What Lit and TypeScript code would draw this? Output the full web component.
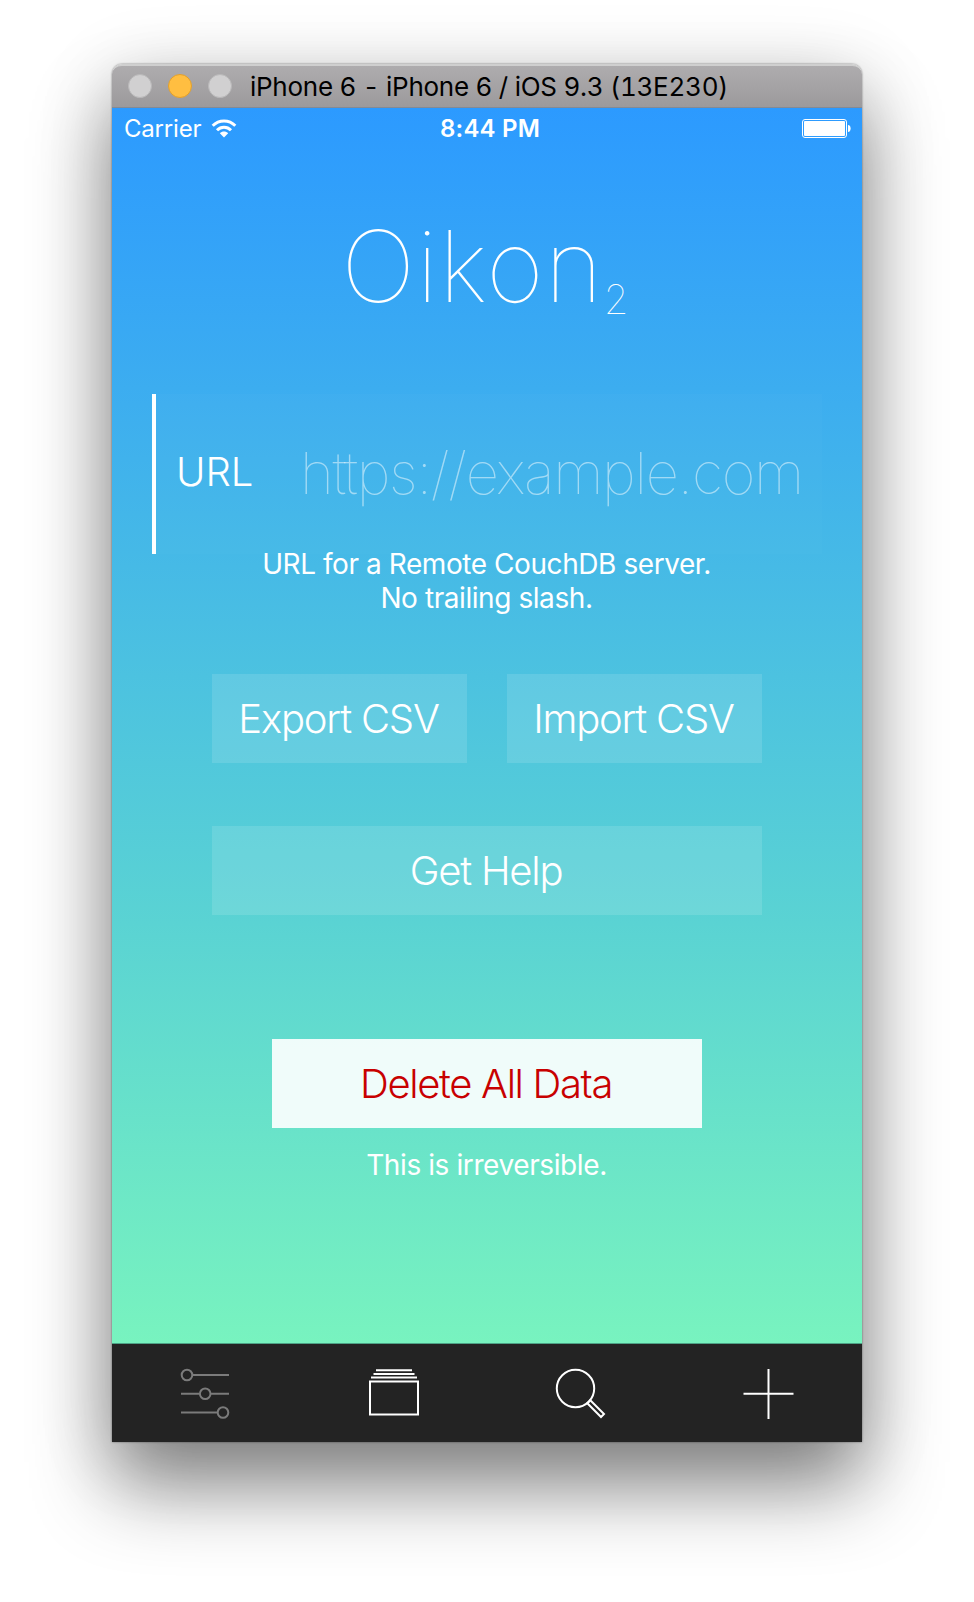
import { LitElement, html, css } from "lit";
import { customElement } from "lit/decorators.js";

@customElement("app-root")
export class AppRoot extends LitElement {
  static styles = css`
    :host { display: block; box-sizing: border-box; width: 974px; height: 1602px; padding: 64px 112px 0; background: #fff; overflow: hidden; font-family: Inter, "Liberation Sans", sans-serif; color: #fff; }
    .window { width: 750px; height: 1378px; border-radius: 10px 10px 0 0; box-shadow: 0 0 2px rgba(0,0,0,.55), 0 46px 80px rgba(0,0,0,.44), 0 12px 76px rgba(0,0,0,.16); display: flex; flex-direction: column; }
    .titlebar { height: 44px; box-sizing: border-box; border-radius: 10px 10px 0 0; background: linear-gradient(#aeacae, #9c9a9c); border-top: 2px solid #cfcfcf; border-bottom: 1px solid #858a94; display: flex; align-items: center; padding-left: 16px; }
    .dots { display: flex; gap: 16px; width: 122px; margin-top: -2px; }
    .dot { width: 24px; height: 24px; border-radius: 50%; background: #d1d0d1; box-sizing: border-box; border: 1px solid #b9b8b9; }
    .dot.min { background: #ffbe41; border: 1px solid #e2a02c; }
    .title { color: #000; font-size: 26px; line-height: 40px; font-variant-numeric: tabular-nums; letter-spacing: -0.27px; white-space: nowrap; }
    .screen { height: 1236px; box-sizing: border-box; border-bottom: 1px solid #4da286; background: linear-gradient(#2c9aff, #3daeef 24%, #4cc2e0 46%, #5ad3d3 66%, #78f3bf); display: flex; flex-direction: column; align-items: center; }
    .status { width: 100%; height: 40px; box-sizing: border-box; padding: 1px 11px 0 12px; display: grid; grid-template-columns: 1fr auto 1fr; align-items: center; font-size: 24px; line-height: 40px; }
    .carrier { display: flex; align-items: center; gap: 10px; letter-spacing: -0.2px; }
    .carrier svg, .battery { margin-bottom: 2px; }
    .time { font-weight: 600; letter-spacing: 0.2px; padding-left: 5px; }
    .battery { justify-self: end; display: block; }
    .brand { height: 246px; box-sizing: border-box; padding: 60px 4px 0 0; display: flex; align-items: baseline; font-weight: 100; }
    .name { font-size: 99px; line-height: 116px; letter-spacing: 1.2px; }
    .ver { font-size: 40px; line-height: 40px; position: relative; top: 12px; }
    .field { width: 670px; height: 160px; box-sizing: border-box; border-left: 4px solid #fff; background: rgba(255,255,255,.015); display: flex; }
    .label { font-size: 40px; font-weight: 300; line-height: 156px; width: 124px; padding-left: 20px; }
    .ph { font-size: 58px; font-weight: 100; line-height: 158px; letter-spacing: -1.3px; color: rgba(255,255,255,.5); white-space: nowrap; }
    .hint { font-size: 28px; line-height: 34px; letter-spacing: -0.43px; text-align: center; margin-top: -7px; padding-right: 1px; }
    .btns { width: 550px; margin-top: 59px; display: grid; grid-template-columns: 1fr 1fr; column-gap: 40px; row-gap: 63px; }
    .btn { box-sizing: border-box; height: 89px; padding-right: 2px; line-height: 89px; font-size: 40px; font-weight: 300; letter-spacing: -1.2px; text-align: center; background: rgba(255,255,255,.12); white-space: nowrap; }
    .wide { grid-column: 1 / 3; }
    .delete { width: 430px; margin-top: 124px; letter-spacing: -1.35px; background: rgba(255,255,255,.9); color: #c80000; }
    .warn { font-size: 28px; line-height: 34px; letter-spacing: -0.4px; margin-top: 20px; padding-right: 1px; }
    .tabs { height: 98px; background: #232323; display: grid; grid-template-columns: repeat(4, 187.5px); }
    .tab { height: 98px; display: block; fill: none; stroke: #fff; stroke-width: 2; }
    .tab.on { stroke: #7b7b7b; }
  `;
  render() {
    return html`<div class="window">
      <div class="titlebar">
        <div class="dots"><i class="dot"></i><i class="dot min"></i><i class="dot"></i></div>
        <div class="title">iPhone 6 - iPhone 6 / iOS 9.3 (13E230)</div>
      </div>
      <div class="screen">
        <div class="status">
          <div class="carrier"><span>Carrier</span>
            <svg width="26" height="19" viewBox="0 0 26 19" fill="none" stroke="#fff" stroke-width="3"><path d="M1.700 6.800C8 .4 18 .4 24.300 6.800M6 11.200C10 7.200 16 7.200 20 11.200"/><path d="M13 18.500L8.800 14.200C11 12 15 12 17.200 14.200Z" fill="#fff" stroke="none"/></svg>
          </div>
          <div class="time">8:44 PM</div>
          <svg class="battery" width="49" height="19" viewBox="0 0 49 19"><rect x=".5" y=".5" width="44" height="18" rx="2.500" fill="none" stroke="#fff"/><rect x="2" y="2" width="41" height="15" rx="1" fill="#fff"/><path d="M46 6C49.500 6 49.500 13 46 13Z" fill="#fff"/></svg>
        </div>
        <div class="brand"><span class="name">Oikon</span><span class="ver">2</span></div>
        <div class="field"><div class="label">URL</div><div class="ph">https://example.com</div></div>
        <div class="hint">URL for a Remote CouchDB server.<br>No trailing slash.</div>
        <div class="btns"><div class="btn">Export CSV</div><div class="btn">Import CSV</div><div class="btn wide">Get Help</div></div>
        <div class="btn delete">Delete All Data</div>
        <div class="warn">This is irreversible.</div>
      </div>
      <div class="tabs">
        <svg class="tab on" width="187" height="98" viewBox="0 0 187 98"><path d="M81 31H117M69 49.700H87.500M99 49.700H117M69 68.500H105"/><circle cx="75" cy="31" r="5.300"/><circle cx="93.200" cy="49.700" r="5.300"/><circle cx="111" cy="68.500" r="5.300"/></svg>
        <svg class="tab" width="187" height="98" viewBox="188 0 187 98"><path d="M264 26.300H300M261.500 30H302.500M259 33.500H305"/><rect x="258" y="37.500" width="48" height="33"/></svg>
        <svg class="tab" width="187" height="98" viewBox="375 0 187 98"><circle cx="463.500" cy="44.500" r="18.700"/><path d="M478.300 56.200L492 70L489 73L475.300 59.200Z"/></svg>
        <svg class="tab" width="187" height="98" viewBox="562.500 0 187 98"><path d="M656 25V75M631 49.800H681"/></svg>
      </div>
    </div>`;
  }
}
